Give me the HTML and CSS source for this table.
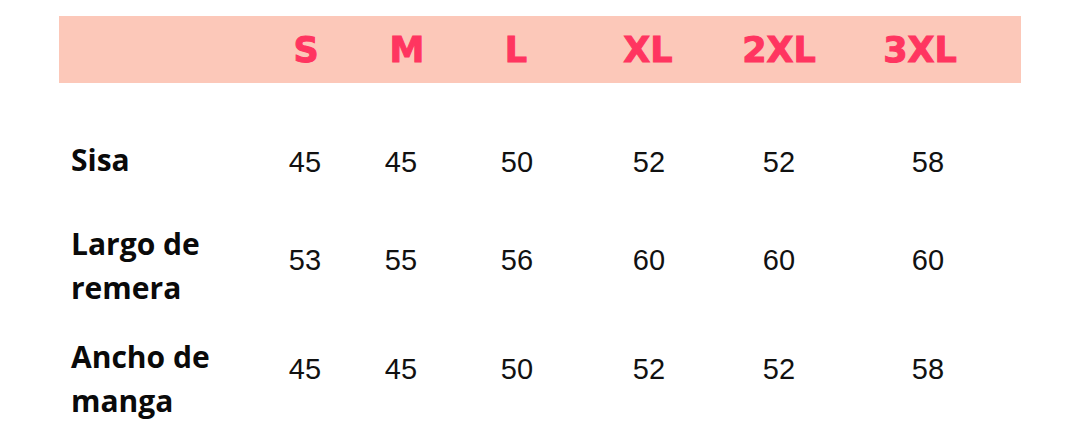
FILE: index.html
```html
<!DOCTYPE html>
<html lang="es">
<head>
<meta charset="utf-8">
<title>Tabla de talles</title>
<link rel="stylesheet" href="styles.css">
</head>
<body>
<div class="chart">
  <div class="head">
    <span></span>
    <span>S</span><span>M</span><span>L</span><span>XL</span><span>2XL</span><span>3XL</span>
  </div>
  <div class="rows">
    <div class="row r1">
      <div class="label">Sisa</div>
      <div class="v">45</div><div class="v">45</div><div class="v">50</div><div class="v">52</div><div class="v">52</div><div class="v">58</div>
    </div>
    <div class="row r2">
      <div class="label">Largo de<br>remera</div>
      <div class="v">53</div><div class="v">55</div><div class="v">56</div><div class="v">60</div><div class="v">60</div><div class="v">60</div>
    </div>
    <div class="row r3">
      <div class="label">Ancho de<br>manga</div>
      <div class="v">45</div><div class="v">45</div><div class="v">50</div><div class="v">52</div><div class="v">52</div><div class="v">58</div>
    </div>
  </div>
</div>
</body>
</html>
```
FILE: styles.css
```css
html, body {
  margin: 0;
  padding: 0;
  background: #ffffff;
}
body {
  padding: 16px 0 0 59px;
}
.chart {
  width: 962px;
}
.head {
  display: grid;
  grid-template-columns: 197px 100px 102px 116px 148px 114px 168px;
  align-items: center;
  height: 67px;
  background: #fcc8b9;
  font-family: "DejaVu Sans", sans-serif;
  font-weight: bold;
  font-size: 35px;
  color: #ff3560;
  -webkit-text-stroke: 1px #ff3560;
  text-align: center;
}
.rows {
  margin-top: 55px;
}
.row {
  display: grid;
  grid-template-columns: 198px 96px 96px 136px 128px 132px 166px;
  align-items: start;
}
.r1 { height: 84px; }
.r2 { height: 113px; }
.label {
  padding-left: 12px;
  font-family: "Open Sans", sans-serif;
  font-weight: bold;
  font-size: 30px;
  line-height: 44px;
  color: #0a0a0a;
}
.v {
  text-align: center;
  font-family: "Liberation Sans", Arial, sans-serif;
  font-size: 29px;
  line-height: 44px;
  color: #111;
}
.r1 .v { padding-top: 2px; }
.r2 .v { padding-top: 16px; }
.r3 .v { padding-top: 12px; }
```
